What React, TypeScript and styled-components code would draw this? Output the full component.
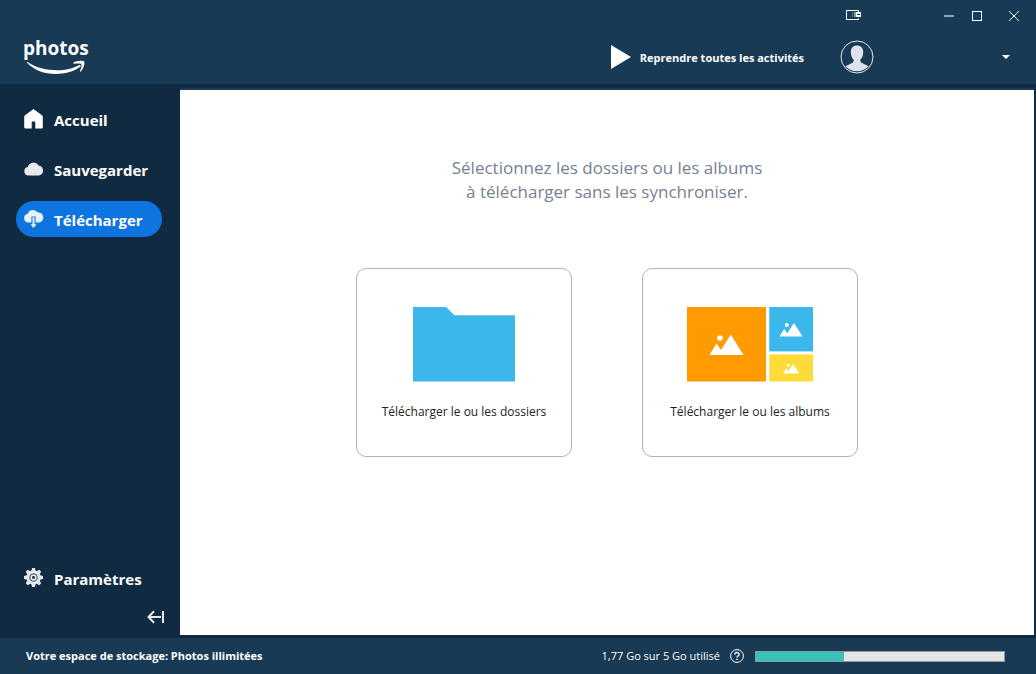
import React from "react";
import styled, { createGlobalStyle } from "styled-components";

const GlobalStyle = createGlobalStyle`
  * { box-sizing: border-box; }
  body {
    margin: 0;
    background: #183a54;
    font-family: "Open Sans", "Noto Sans", sans-serif;
  }
  button { font: inherit; color: inherit; background: none; border: 0; padding: 0; cursor: pointer; }
  svg { display: block; flex: none; }
`;

const Window = styled.div`
  display: flex;
  flex-direction: column;
  min-height: 100vh;
  color: #fff;
  background: #183a54;
`;

const Header = styled.header`
  display: flex;
  justify-content: space-between;
  height: 84px;
`;

const Logo = styled.a`
  display: block;
  padding: 36px 0 0 23px;
  color: #fff;
  text-decoration: none;
  font-size: 19px;
  font-weight: 700;
  line-height: 24px;
`;

const HeaderSide = styled.div`
  display: flex;
  flex-direction: column;
`;

const TitleBar = styled.div`
  display: flex;
  justify-content: flex-end;
  align-items: center;
  height: 32px;
  padding-right: 17px;
`;

const WindowButton = styled.button<{ $gap: number }>`
  margin-left: ${(p) => p.$gap}px;
`;

const AccountBar = styled.div`
  display: flex;
  align-items: center;
  height: 50px;
  padding-right: 26px;
`;

const ResumeButton = styled.button`
  display: flex;
  align-items: center;
  gap: 9px;
  font-size: 11px;
  font-weight: 700;
  line-height: 20px;
  white-space: nowrap;
`;

const AccountButton = styled.button`
  display: flex;
  align-items: center;
  justify-content: space-between;
  width: 170px;
  margin-left: 36px;
`;

const Body = styled.div`
  display: flex;
  flex: 1;
  background: #102b41;
`;

const Sidebar = styled.aside`
  display: flex;
  flex-direction: column;
  flex: none;
  width: 180px;
  padding: 17px 15px 14px 16px;
`;

const Nav = styled.nav`
  display: flex;
  flex-direction: column;
  flex: 1;
  gap: 14px;
`;

const NavItem = styled.a<{ $active?: boolean; $last?: boolean }>`
  display: flex;
  align-items: center;
  gap: 10px;
  width: 146px;
  height: 36px;
  padding-left: 8px;
  border-radius: 18px;
  margin-top: ${(p) => (p.$last ? "auto" : "0")};
  background: ${(p) => (p.$active ? "#0d74e0" : "transparent")};
  color: #fff;
  text-decoration: none;
  font-size: 15px;
  font-weight: 700;
  line-height: 20px;
`;

const Label = styled.span`
  padding-top: 2px;
`;

const CollapseButton = styled.button`
  align-self: flex-end;
  margin-top: 14px;
`;

const Main = styled.main`
  display: flex;
  flex-direction: column;
  align-items: center;
  flex: 1;
  margin: 6px 2px 3px 0;
  padding: 66px 24px 24px;
  background: #fff;
  box-shadow: 0 -2px 0 #183a54;
`;

const Prompt = styled.h1`
  margin: 0;
  color: #768191;
  font-size: 17px;
  font-weight: 400;
  line-height: 24px;
  text-align: center;
`;

const Cards = styled.div`
  display: flex;
  gap: 70px;
  margin-top: 64px;
`;

const Card = styled.button`
  display: flex;
  flex-direction: column;
  align-items: center;
  width: 216px;
  height: 189px;
  padding-top: 38px;
  gap: 20px;
  border: 1px solid #aab7b8;
  border-radius: 10px;
  color: #222;
  font-size: 12px;
  line-height: 20px;
`;

const Footer = styled.footer`
  display: flex;
  align-items: center;
  height: 36px;
  padding: 0 31px 0 26px;
  font-size: 11px;
  line-height: 20px;
`;

const Plan = styled.span`
  margin-right: auto;
  font-weight: 700;
`;

const HelpButton = styled.button`
  margin: 0 11px 0 10px;
`;

const StorageMeter = styled.progress`
  appearance: none;
  width: 250px;
  height: 11px;
  border: 1px solid #8f989f;
  background: #e6e6e6;
  &::-webkit-progress-bar { background: #e6e6e6; }
  &::-webkit-progress-value { background: #37c3b7; }
`;

const Smile = () => (
  <svg width="66" height="15" viewBox="0 0 66 15" fill="#fff" aria-hidden="true">
    <path d="M4.500 2C13 8 24 10.200 34 10.200C43 10.200 50 8.200 56 5.200C57.500 4.500 58.300 5.800 57.200 6.800C51 12 41 14 33 14C21 14 11.500 10 4.500 3.200C3.700 2.400 3.800 1.500 4.500 2Z" />
    <path d="M50.500 2.600C52.500 .9 59.500 .1 61 1.300C62.300 3 60.500 9 57.800 11.500C57.200 12 56.700 11.700 57 11C58 8.500 59 5.200 58.300 4.200C57.500 3.200 54 3.500 51.200 3.800C50.300 3.900 50 3.200 50.500 2.600Z" />
  </svg>
);

const HomeIcon = () => (
  <svg width="20" height="20" viewBox="0 0 20 20" fill="#fff" aria-hidden="true">
    <path d="M9.500 0L18 6.200Q18.800 6.800 18.800 8V18.200Q18.800 19.500 17.500 19.500H11.300V13.200Q11.300 12.500 10.600 12.500H8.400Q7.700 12.500 7.700 13.200V19.500H1.500Q.2 19.500 .2 18.200V8Q.2 6.800 1 6.200Z" />
  </svg>
);

const CloudIcon = () => (
  <svg width="20" height="20" viewBox="0 0 20 20" fill="#e7eaec" aria-hidden="true">
    <path d="M4.500 16.600A4.400 4.400 0 0 1 3.800 7.900A6 6 0 0 1 14.600 6.400A5.200 5.200 0 0 1 15 16.600Z" />
  </svg>
);

const CloudDownloadIcon = () => (
  <svg width="20" height="20" viewBox="0 0 20 20" aria-hidden="true">
    <path fill="#e7f1fc" d="M4.200 13.500A4.300 4.300 0 0 1 3.500 5A5.800 5.800 0 0 1 13.800 3.500A5 5 0 0 1 14.800 13.500Z" />
    <path fill="#0d74e0" d="M7.400 7.500H11.600V14H7.400Z" />
    <path fill="#e7f1fc" d="M8.500 8.300H10.500V15.200H12.500L9.500 19L6.500 15.200H8.500Z" />
  </svg>
);

const GearIcon = () => (
  <svg width="20" height="20" viewBox="0 0 20 20" aria-hidden="true">
    <g fill="#e7eaec">
      <circle cx="9.500" cy="9.500" r="7.200" />
      {[0, 45, 90, 135, 180, 225, 270, 315].map((angle) => (
        <path key={angle} transform={`rotate(${angle} 9.500 9.500)`} d="M7.300 3.300L8.100 0H10.900L11.700 3.300Z" />
      ))}
    </g>
    <circle cx="9.500" cy="9.500" r="3.700" fill="none" stroke="#52677a" strokeWidth="1.200" />
    <circle cx="9.500" cy="9.500" r="1.400" fill="#102b41" />
  </svg>
);

const CollapseIcon = () => (
  <svg width="18" height="14" viewBox="0 0 18 14" fill="none" stroke="#e7eaec" strokeWidth="2" aria-hidden="true">
    <path d="M7 1.200L1.500 7L7 12.800M1.500 7H14M16 1V13" />
  </svg>
);

const PlayIcon = () => (
  <svg width="20" height="24" viewBox="0 0 20 24" fill="#fff" aria-hidden="true">
    <path d="M0 0L20 12L0 24Z" />
  </svg>
);

const AvatarIcon = () => (
  <svg width="34" height="34" viewBox="0 0 34 34" aria-hidden="true">
    <path fill="#dfe3ee" d="M17 5.500C21 5.500 23.200 8.200 23.200 12.200C23.200 16 21.500 18.300 20.500 19.600C20 21 20.800 22.600 22.500 23.300L28.600 26.200A15.800 15.800 0 0 1 5.400 26.200L11.500 23.300C13.200 22.600 14 21 13.500 19.600C12.500 18.300 10.800 16 10.800 12.200C10.800 8.200 13 5.500 17 5.500Z" />
    <circle cx="17" cy="17" r="16" fill="none" stroke="#e4e9ee" />
  </svg>
);

const CaretIcon = () => (
  <svg width="8" height="4" viewBox="0 0 8 4" fill="#fff" aria-hidden="true">
    <path d="M0 0H8L4 4Z" />
  </svg>
);

const PanelIcon = () => (
  <svg width="16" height="12" viewBox="0 0 16 12" aria-hidden="true">
    <path d="M12.500 2V.5H.5V9.500H12.500V8" fill="none" stroke="#fff" />
    <path d="M6 2H7V7H6Z" fill="#5b7286" />
    <path d="M8 2H10V7H8Z" fill="#8b9aa8" />
    <path d="M10 2H15V7H10Z" fill="#fff" />
    <path d="M11 4H14V5H11Z" fill="#183a54" />
  </svg>
);

const MinimizeIcon = () => (
  <svg width="10" height="10" viewBox="0 0 10 10" aria-hidden="true">
    <path d="M0 4H10V6H0Z" fill="#97a6b3" />
  </svg>
);

const MaximizeIcon = () => (
  <svg width="10" height="10" viewBox="0 0 10 10" aria-hidden="true">
    <rect x=".5" y=".5" width="9" height="9" fill="none" stroke="#fff" />
  </svg>
);

const CloseIcon = () => (
  <svg width="10" height="10" viewBox="0 0 10 10" aria-hidden="true">
    <path d="M0 0L10 10M10 0L0 10" stroke="#fff" />
  </svg>
);

const FolderArt = () => (
  <svg width="102" height="75" viewBox="0 0 102 75" aria-hidden="true">
    <path d="M0 0H33L41.500 8.300H102V74.500H0Z" fill="#3bb7ec" />
  </svg>
);

const AlbumArt = () => (
  <svg width="126" height="75" viewBox="0 0 126 75" aria-hidden="true">
    <rect width="79" height="74.500" fill="#ff9a00" />
    <rect x="82.300" width="43.700" height="44.400" fill="#3bb7ec" />
    <rect x="82.300" y="47.400" width="43.700" height="27.100" fill="#ffdb3a" />
    <g fill="#fff">
      <circle cx="33" cy="31" r="2.800" />
      <path d="M22.500 48L29.500 36.500L34 43L43.800 27.500L56.500 48Z" />
      <circle cx="99.800" cy="18" r="1.900" />
      <path d="M92.500 29.500L97.200 22L100.300 26.200L107 16L115.500 29.500Z" />
      <circle cx="101" cy="58.300" r="1.400" />
      <path d="M96 66.500L99.300 61.300L101.500 64L106.300 57L112.300 66.500Z" />
    </g>
  </svg>
);

const HelpIcon = () => (
  <svg width="14" height="14" viewBox="0 0 14 14" fill="none" stroke="#fff" aria-hidden="true">
    <circle cx="7" cy="7" r="6.400" />
    <path d="M5 5.500C5 2.900 9 2.900 9 5.400C9 7 7 6.900 7 8.600" strokeWidth="1.400" />
    <path d="M7 9.700V11" strokeWidth="1.500" />
  </svg>
);

export default function App() {
  return (
    <Window>
      <GlobalStyle />
      <Header>
        <Logo href="#">
          photos
          <Smile />
        </Logo>
        <HeaderSide>
          <TitleBar>
            <WindowButton $gap={0} aria-label="Panneau"><PanelIcon /></WindowButton>
            <WindowButton $gap={82} aria-label="Réduire"><MinimizeIcon /></WindowButton>
            <WindowButton $gap={18} aria-label="Agrandir"><MaximizeIcon /></WindowButton>
            <WindowButton $gap={27} aria-label="Fermer"><CloseIcon /></WindowButton>
          </TitleBar>
          <AccountBar>
            <ResumeButton>
              <PlayIcon />
              <Label>Reprendre toutes les activités</Label>
            </ResumeButton>
            <AccountButton aria-label="Compte">
              <AvatarIcon />
              <CaretIcon />
            </AccountButton>
          </AccountBar>
        </HeaderSide>
      </Header>
      <Body>
        <Sidebar>
          <Nav>
            <NavItem href="#"><HomeIcon /><Label>Accueil</Label></NavItem>
            <NavItem href="#"><CloudIcon /><Label>Sauvegarder</Label></NavItem>
            <NavItem href="#" $active aria-current="page"><CloudDownloadIcon /><Label>Télécharger</Label></NavItem>
            <NavItem href="#" $last><GearIcon /><Label>Paramètres</Label></NavItem>
          </Nav>
          <CollapseButton aria-label="Replier le menu"><CollapseIcon /></CollapseButton>
        </Sidebar>
        <Main>
          <Prompt>
            Sélectionnez les dossiers ou les albums
            <br />
            à télécharger sans les synchroniser.
          </Prompt>
          <Cards>
            <Card><FolderArt />Télécharger le ou les dossiers</Card>
            <Card><AlbumArt />Télécharger le ou les albums</Card>
          </Cards>
        </Main>
      </Body>
      <Footer>
        <Plan>Votre espace de stockage: Photos illimitées</Plan>
        <label htmlFor="storage">1,77 Go sur 5 Go utilisé</label>
        <HelpButton aria-label="Aide"><HelpIcon /></HelpButton>
        <StorageMeter id="storage" max={5} value={1.77} />
      </Footer>
    </Window>
  );
}
